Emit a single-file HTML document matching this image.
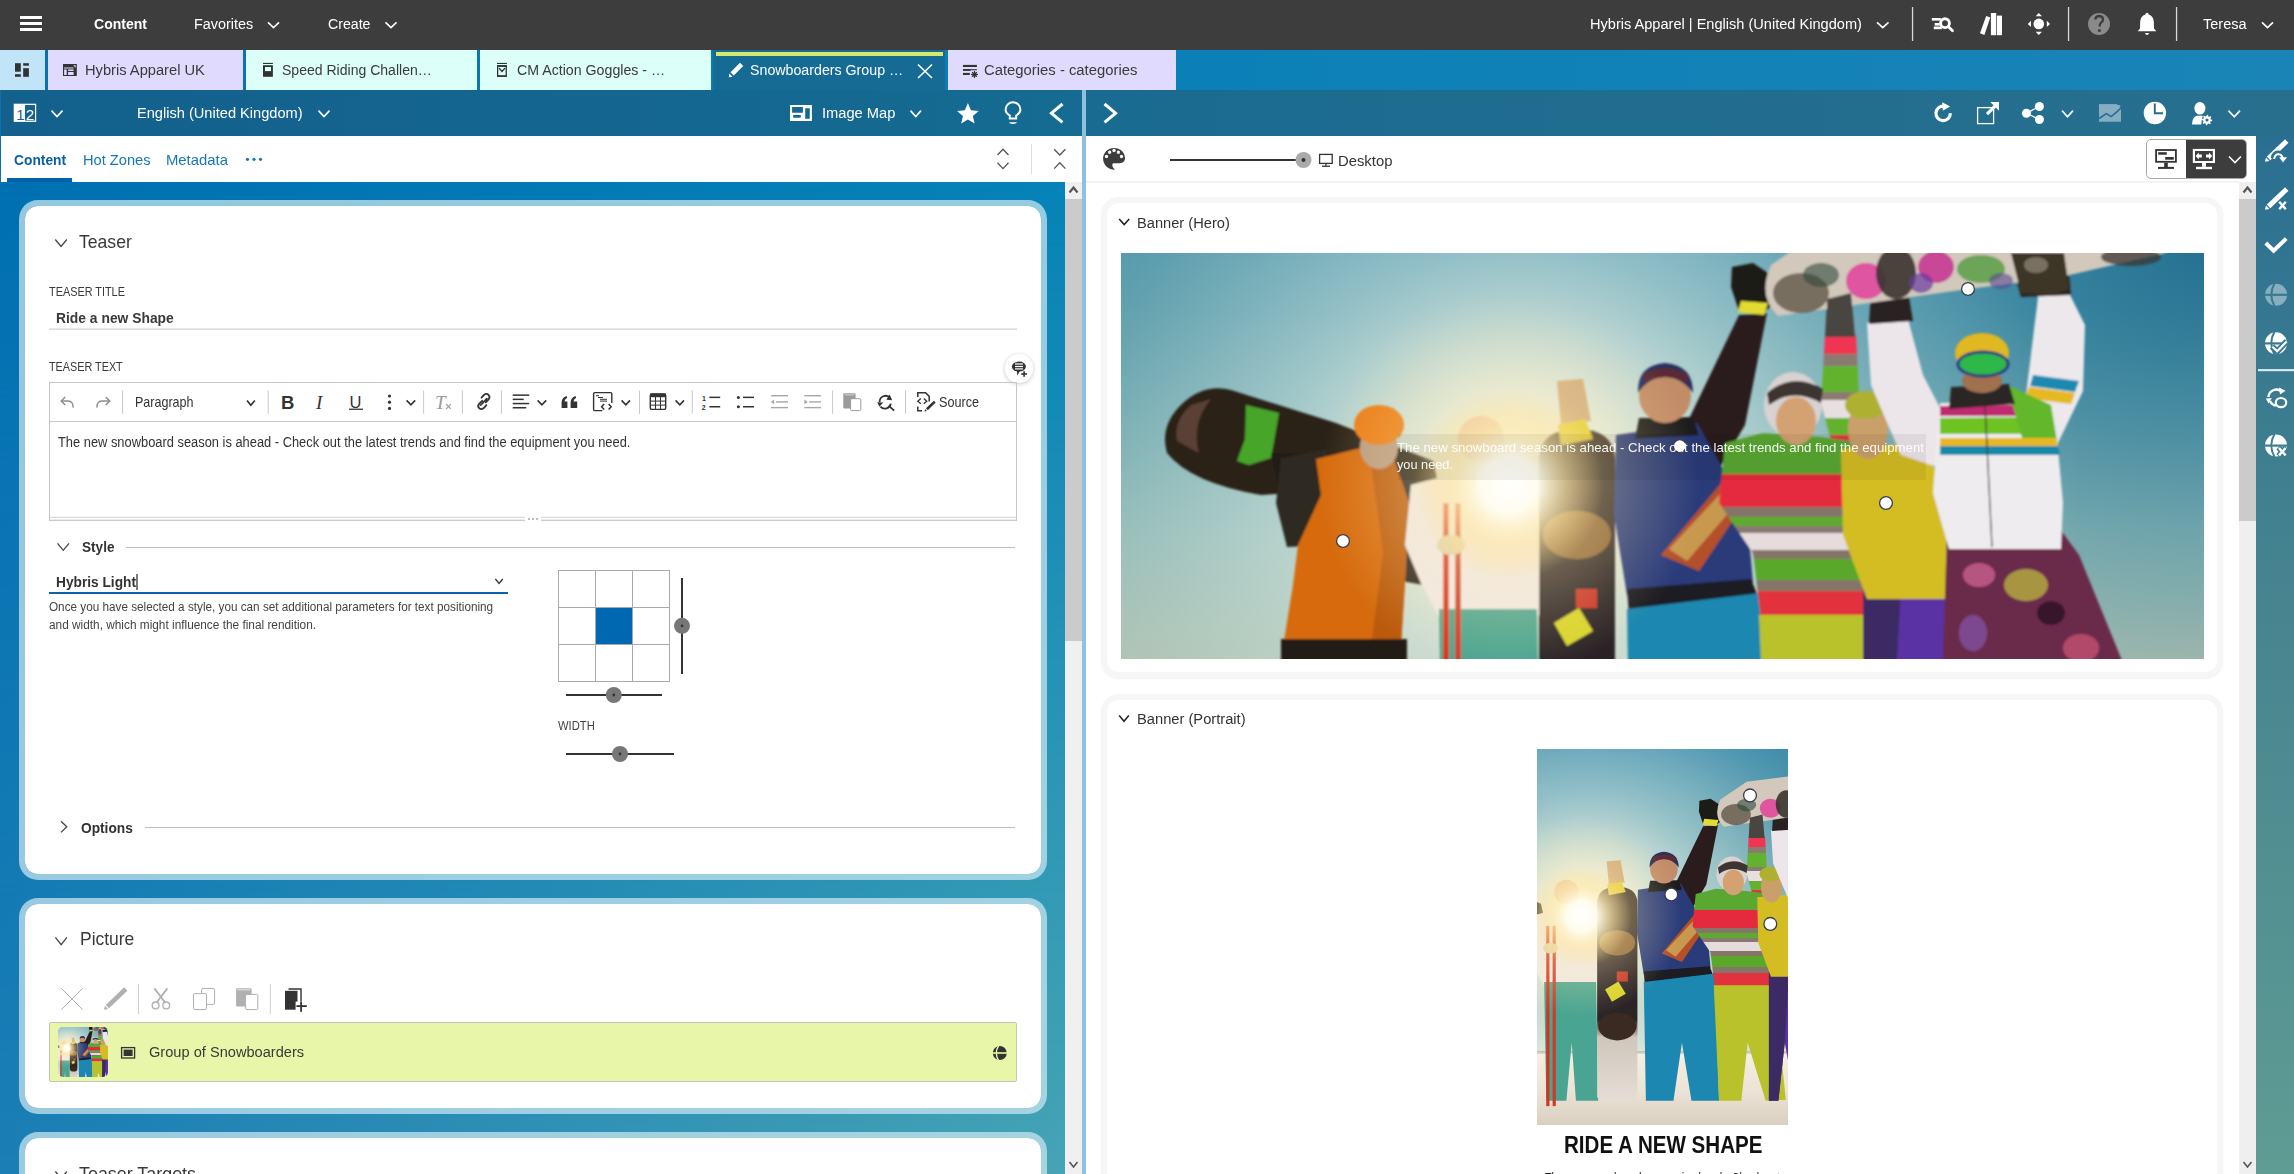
<!DOCTYPE html><html><head><meta charset="utf-8"><style>
*{box-sizing:border-box;margin:0;padding:0}
html,body{width:2294px;height:1174px;overflow:hidden;background:#fff;font-family:"Liberation Sans",sans-serif}
.a{position:absolute}
.tx{position:absolute;white-space:nowrap;line-height:1;transform-origin:0 0}
svg{position:absolute;overflow:visible}
</style></head><body>
<div class='a' style='left:0px;top:0px;width:2294px;height:50px;background:#3d3d3d'></div>
<div class='a' style='left:0px;top:50px;width:2294px;height:40px;background:linear-gradient(90deg,#0a6fae 0%,#0a80b8 50%,#1a84b6 100%)'></div>
<div class='a' style='left:0px;top:50px;width:45px;height:40px;background:#c2e4f9'></div>
<div class='a' style='left:48px;top:50px;width:195px;height:40px;background:#e0dbfe'></div>
<div class='a' style='left:246px;top:50px;width:231px;height:40px;background:#ddfff9'></div>
<div class='a' style='left:480px;top:50px;width:231px;height:40px;background:#ddfff9'></div>
<div class='a' style='left:713px;top:50px;width:232px;height:40px;background:#156b94'></div>
<div class='a' style='left:716px;top:52px;width:227px;height:4px;background:#d5ea6c'></div>
<div class='a' style='left:948px;top:50px;width:228px;height:40px;background:#e0dbfe'></div>
<div class='a' style='left:0px;top:90px;width:1082px;height:46px;background:linear-gradient(90deg,#13608d 0%,#156b92 100%)'></div>
<div class='a' style='left:0px;top:90px;width:1px;height:46px;background:#0a72b0'></div>
<div class='a' style='left:1086px;top:90px;width:1208px;height:46px;background:linear-gradient(90deg,#1a6b91 0%,#286f8e 100%)'></div>
<div class='a' style='left:1082px;top:90px;width:4px;height:1084px;background:#8ec2dc'></div>
<div class='a' style='left:0px;top:136px;width:1082px;height:46px;background:#fff'></div>
<div class='a' style='left:0px;top:136px;width:1px;height:46px;background:#0a72b0'></div>
<div class='a' style='left:7px;top:178px;width:65px;height:4px;background:#0461aa'></div>
<div class='a' style='left:0;top:182px;width:1065px;height:992px;background:linear-gradient(90deg,#0070b2,#0683b8)'></div>
<div class='a' style='left:0;top:182px;width:1065px;height:992px;background:linear-gradient(90deg,#1b7eb5,#46a4b4);-webkit-mask-image:linear-gradient(180deg,transparent,#000)'></div>
<div class='a' style='left:1065px;top:182px;width:17px;height:992px;background:#f0f0f0'></div>
<div class='a' style='left:1065px;top:199px;width:17px;height:442px;background:#cbcbcb'></div>
<div class='a' style='left:1086px;top:136px;width:1170px;height:1038px;background:#fff'></div>
<div class='a' style='left:1086px;top:181px;width:1153px;height:2px;background:linear-gradient(180deg,#ececec,#fafafa)'></div>
<div class='a' style='left:2239px;top:182px;width:17px;height:992px;background:#efefef'></div>
<div class='a' style='left:2239px;top:199px;width:17px;height:322px;background:#cbcbcb'></div>
<div class='a' style='left:2256px;top:136px;width:38px;height:1038px;background:linear-gradient(180deg,#2a6f92 0%,#41808f 35%,#5f9c94 100%)'></div>
<div class='a' style='left:2258px;top:369px;width:36px;height:2px;background:#cfe0e8'></div>
<div class='a' style='left:19px;top:200px;width:1028px;height:680px;border:6px solid rgba(200,230,240,0.74);border-radius:19px;background:#fff;background-clip:padding-box'></div>
<div class='a' style='left:19px;top:898px;width:1028px;height:216px;border:6px solid rgba(200,230,240,0.74);border-radius:19px;background:#fff;background-clip:padding-box'></div>
<div class='a' style='left:19px;top:1132px;width:1028px;height:168px;border:6px solid rgba(200,230,240,0.74);border-radius:19px;background:#fff;background-clip:padding-box'></div>
<div class='a' style='left:1101px;top:197px;width:1122px;height:481px;border:6px solid #f6f6f6;border-radius:18px;background:#fff;box-shadow:0 1px 2px rgba(0,0,0,0.06)'></div>
<div class='a' style='left:1101px;top:694px;width:1122px;height:606px;border:6px solid #f6f6f6;border-radius:18px;background:#fff;box-shadow:0 1px 2px rgba(0,0,0,0.06)'></div>
<svg style='left:0;top:0;width:0;height:0' width='0' height='0'>
<defs>
<linearGradient id='sky' gradientUnits='userSpaceOnUse' x1='0' y1='-90' x2='0' y2='500'>
 <stop offset='0' stop-color='#2f84a8'/><stop offset='0.25' stop-color='#4c94a8'/><stop offset='0.62' stop-color='#94bab4'/><stop offset='0.84' stop-color='#adbfae'/><stop offset='1' stop-color='#eeece0'/>
</linearGradient>
<radialGradient id='sunglow' gradientUnits='userSpaceOnUse' cx='400' cy='230' r='560'>
 <stop offset='0' stop-color='#fffbe6' stop-opacity='1'/><stop offset='0.15' stop-color='#f4f2e2' stop-opacity='0.9'/><stop offset='0.42' stop-color='#d4e8e2' stop-opacity='0.55'/><stop offset='0.75' stop-color='#c0dcd8' stop-opacity='0.2'/><stop offset='1' stop-color='#c8e0dc' stop-opacity='0'/>
</radialGradient>
<radialGradient id='darkTR' gradientUnits='userSpaceOnUse' cx='1090' cy='-20' r='520'>
 <stop offset='0' stop-color='#1f6a8c' stop-opacity='0.85'/><stop offset='0.6' stop-color='#2f7f9e' stop-opacity='0.35'/><stop offset='1' stop-color='#3a86a8' stop-opacity='0'/>
</radialGradient>
<radialGradient id='darkTL' gradientUnits='userSpaceOnUse' cx='-40' cy='-40' r='420'>
 <stop offset='0' stop-color='#4a92a0' stop-opacity='0.5'/><stop offset='1' stop-color='#5a9aa4' stop-opacity='0'/>
</radialGradient>
<radialGradient id='sun' gradientUnits='userSpaceOnUse' cx='388' cy='232' r='95'>
 <stop offset='0' stop-color='#ffffff' stop-opacity='1'/><stop offset='0.3' stop-color='#fffdf0' stop-opacity='0.95'/><stop offset='0.6' stop-color='#ffe9a8' stop-opacity='0.55'/><stop offset='1' stop-color='#ffd880' stop-opacity='0'/>
</radialGradient>
<radialGradient id='sunhalo' gradientUnits='userSpaceOnUse' cx='388' cy='232' r='190'>
 <stop offset='0' stop-color='#fff4c8' stop-opacity='0.6'/><stop offset='1' stop-color='#ffe8a0' stop-opacity='0'/>
</radialGradient>
<linearGradient id='stripes' gradientUnits='userSpaceOnUse' x1='0' y1='180' x2='0' y2='366'>
 <stop offset='0' stop-color='#5aa830'/><stop offset='0.22' stop-color='#5aa830'/><stop offset='0.22' stop-color='#e62a3e'/><stop offset='0.40' stop-color='#e62a3e'/><stop offset='0.40' stop-color='#857468'/><stop offset='0.45' stop-color='#857468'/>
 <stop offset='0.45' stop-color='#5eaa2e'/><stop offset='0.50' stop-color='#5eaa2e'/><stop offset='0.50' stop-color='#887a70'/><stop offset='0.54' stop-color='#887a70'/><stop offset='0.54' stop-color='#e6dcdc'/><stop offset='0.63' stop-color='#e6dcdc'/>
 <stop offset='0.63' stop-color='#857468'/><stop offset='0.68' stop-color='#857468'/><stop offset='0.68' stop-color='#5aa82c'/><stop offset='0.79' stop-color='#5aa82c'/><stop offset='0.79' stop-color='#857468'/><stop offset='0.85' stop-color='#857468'/><stop offset='0.85' stop-color='#e2303c'/><stop offset='1' stop-color='#e2303c'/>
</linearGradient>
<linearGradient id='armstripes' gradientUnits='userSpaceOnUse' x1='0' y1='82' x2='0' y2='200'>
 <stop offset='0' stop-color='#f03452'/><stop offset='0.16' stop-color='#f03452'/><stop offset='0.16' stop-color='#8a7a70'/><stop offset='0.26' stop-color='#8a7a70'/><stop offset='0.26' stop-color='#62b22e'/><stop offset='0.48' stop-color='#62b22e'/><stop offset='0.48' stop-color='#8a7a70'/><stop offset='0.55' stop-color='#8a7a70'/><stop offset='0.55' stop-color='#e8e0e0'/><stop offset='0.70' stop-color='#e8e0e0'/><stop offset='0.70' stop-color='#62b22e'/><stop offset='0.85' stop-color='#62b22e'/><stop offset='0.85' stop-color='#e83044'/><stop offset='1' stop-color='#e83044'/>
</linearGradient>
<linearGradient id='snow' gradientUnits='userSpaceOnUse' x1='0' y1='488' x2='0' y2='630'>
 <stop offset='0' stop-color='#f4f0e4'/><stop offset='0.5' stop-color='#ece4d6'/><stop offset='1' stop-color='#d8cec0'/>
</linearGradient>
<linearGradient id='boardmid' gradientUnits='userSpaceOnUse' x1='0' y1='180' x2='0' y2='580'>
 <stop offset='0' stop-color='#3a2c22'/><stop offset='0.45' stop-color='#2a2228'/><stop offset='0.62' stop-color='#2c2626'/><stop offset='0.70' stop-color='#cfc6bc'/><stop offset='1' stop-color='#e6ded6'/>
</linearGradient>
<filter id='soft' x='-5%' y='-5%' width='110%' height='110%'><feGaussianBlur stdDeviation='1.1'/></filter>
<filter id='soft2' x='-20%' y='-20%' width='140%' height='140%'><feGaussianBlur stdDeviation='6'/></filter>
<g id='scene'>
 <rect x='-100' y='-100' width='1300' height='760' fill='url(#sky)'/>
 <rect x='-100' y='-100' width='1300' height='760' fill='url(#darkTL)'/>
 <rect x='-100' y='-100' width='1300' height='760' fill='url(#darkTR)'/>
 <rect x='-100' y='-100' width='1300' height='760' fill='url(#sunglow)'/>
 <rect x='-100' y='488' width='1300' height='200' fill='url(#snow)'/>
 <rect x='-100' y='486' width='1300' height='5' fill='#8a8478' opacity='0.35'/>
 <g filter='url(#soft)'>
  <!-- left snowboard -->
  <path d='M46 200 Q38 172 62 150 Q84 130 110 137 L215 170 L312 208 L318 234 L288 242 L200 238 L140 242 Q70 230 46 200 Z' fill='#2b2019'/>
  <path d='M56 188 Q52 168 70 152 L90 146 Q70 170 78 200 Z' fill='#5a4034'/>
  <polygon points='125,152 158,160 150,205 128,212 116,208 124,186' fill='#47a52b'/>
  <polygon points='150,200 230,200 235,240 160,245' fill='#231a14'/>
  <!-- orange guy -->
  <polygon points='160,205 205,196 215,240 212,292 166,294 155,250' fill='#2d2a24'/>
  <polygon points='268,210 306,222 312,300 302,332 270,326' fill='#2a231e'/>
  <polygon points='195,206 240,195 272,204 288,250 284,330 280,392 162,394 172,332 177,292 200,242' fill='#d66a10'/>
  <polygon points='250,210 272,204 288,250 284,330 280,392 250,394 262,300' fill='#bb5a0c'/>
  <ellipse cx='258' cy='194' rx='19' ry='22' fill='#b99a80'/>
  <ellipse cx='258' cy='172' rx='25' ry='20' fill='#ea7d16'/>
  <rect x='160' y='386' width='126' height='24' fill='#221c18'/>
  <!-- white woman -->
  <ellipse cx='360' cy='186' rx='23' ry='23' fill='#e8c0a8'/>
  <polygon points='290,232 330,222 396,225 416,262 420,362 318,364 300,330 284,292' fill='#f0e8e8'/>
  <polygon points='318,356 416,356 420,580 378,580 370,470 360,580 322,580' fill='#4aa491'/>
  <rect x='322' y='250' width='6' height='340' fill='#d8331e'/>
  <rect x='334' y='250' width='6' height='340' fill='#d03a26'/>
  <ellipse cx='330' cy='292' rx='14' ry='10' fill='#e0d0a8'/>
  <!-- middle board -->
  <path d='M418 205 Q420 176 456 176 Q492 176 494 205 L494 574 Q456 590 418 574 Z' fill='url(#boardmid)'/>
  <ellipse cx='456' cy='440' rx='36' ry='26' fill='#3a2c20'/>
  <ellipse cx='456' cy='282' rx='34' ry='24' fill='#8a6030'/>
  <polygon points='433,370 458,355 472,378 446,393' fill='#d8d42a'/>
  <rect x='455' y='336' width='21' height='19' fill='#c83028'/>
  <polygon points='436,128 462,126 470,168 440,172' fill='#d0a878'/>
  <polygon points='437,172 464,166 472,186 440,192' fill='#e3cb28'/>
  <!-- blue guy -->
  <polygon points='565,172 618,62 646,60 624,172 598,216' fill='#2a1e1a'/>
  <polygon points='611,14 632,10 650,22 660,46 644,58 618,58 610,34' fill='#1e1a18'/>
  <polygon points='620,48 647,50 643,62 617,59' fill='#e2dc30'/>
  <polygon points='495,182 576,170 602,216 626,262 632,330 506,342 493,262' fill='#2b3b7a'/>
  <polygon points='518,165 572,164 578,182 514,186' fill='#1c1a1e'/>
  <ellipse cx='544' cy='143' rx='26' ry='27' fill='#c28c68'/>
  <path d='M517 140 Q516 112 544 110 Q572 112 572 140 Q560 124 544 124 Q528 124 517 140Z' fill='#26305e'/>
  <path d='M522 122 Q544 108 568 122 L566 130 Q544 118 524 130Z' fill='#5a2a34'/>
  <polygon points='506,336 630,326 638,346 508,362' fill='#1a1a22'/>
  <polygon points='506,356 640,340 648,580 596,580 578,470 562,580 510,580' fill='#1b87b0'/>
  <polygon points='540,302 622,204 648,214 578,318' fill='#b4502c'/>
  <polygon points='548,296 600,240 616,250 566,308' fill='#c89850'/>
  <!-- striped woman -->
  <polygon points='704,82 735,82 740,180 714,202 700,150' fill='url(#armstripes)'/>
  <polygon points='706,46 728,48 732,84 704,84' fill='#4a4440'/>
  <polygon points='604,190 642,180 700,184 742,190 752,250 750,366 640,366 632,300 598,250' fill='url(#stripes)'/>
  <polygon points='638,362 752,362 774,578 736,580 702,470 690,580 648,580' fill='#b9c22a'/>
  <ellipse cx='672' cy='152' rx='29' ry='33' fill='#d8d2d2'/>
  <ellipse cx='675' cy='168' rx='20' ry='24' fill='#d4a272'/>
  <path d='M646 140 Q672 118 702 136 L700 150 Q672 134 648 152Z' fill='#3e3630'/>
  <!-- yellow woman -->
  <polygon points='744,332 828,336 836,578 792,580 772,470 760,580 742,580' fill='#5a32a4'/>
  <polygon points='742,336 780,336 772,470 760,580 742,580' fill='#3a2c64'/>
  <polygon points='720,196 792,190 814,216 832,300 830,346 746,346 722,282' fill='#d4bd24'/>
  <ellipse cx='747' cy='176' rx='20' ry='30' fill='#c9a06a'/>
  <ellipse cx='745' cy='152' rx='21' ry='14' fill='#aeb032'/>
  <!-- right guy -->
  <polygon points='746,70 787,66 802,122 832,180 822,216 780,202 750,132' fill='#ece6ea'/>
  <polygon points='750,40 787,38 792,68 748,71' fill='#2a2420'/>
  <polygon points='918,36 946,36 964,72 962,138 936,192 904,150' fill='#ece8ec'/>
  <polygon points='912,122 958,128 954,139 909,133' fill='#1a8ab0'/>
  <polygon points='908,134 954,140 950,151 904,145' fill='#e6b820'/>
  <polygon points='888,0 946,0 950,42 900,44' fill='#2e2620'/>
  <polygon points='826,278 936,272 958,302 1002,410 1008,580 932,580 906,470 880,580 832,580 822,400' fill='#6a2a4a'/>
  <ellipse cx='905' cy='332' rx='22' ry='16' fill='#b8b040' opacity='0.8'/>
  <ellipse cx='858' cy='322' rx='16' ry='12' fill='#d86898' opacity='0.7'/>
  <ellipse cx='930' cy='360' rx='14' ry='12' fill='#2a1420' opacity='0.8'/>
  <ellipse cx='960' cy='395' rx='18' ry='14' fill='#e06080' opacity='0.6'/>
  <ellipse cx='852' cy='380' rx='14' ry='18' fill='#8860c0' opacity='0.6'/>
  <polygon points='819,150 886,148 936,186 942,250 940,296 828,296 812,240' fill='#efecef'/>
  <polygon points='819,153 900,152 908,163 819,163' fill='#c02a70'/>
  <polygon points='819,165 918,164 930,181 819,181' fill='#6ec224'/>
  <polygon points='886,132 930,152 936,188 902,188' fill='#62b82a'/>
  <polygon points='819,185 935,185 937,193 819,193' fill='#e6b820'/>
  <polygon points='819,193 937,193 939,202 819,202' fill='#1888a8'/>
  <line x1='864' y1='152' x2='871' y2='294' stroke='#333' stroke-width='1.2'/>
  <polygon points='830,134 888,131 894,151 828,156' fill='#2c2826'/>
  <ellipse cx='861' cy='128' rx='20' ry='12' fill='#a07050'/>
  <ellipse cx='861' cy='100' rx='27' ry='20' fill='#e0b820'/>
  <ellipse cx='862' cy='111' rx='25' ry='12' fill='#2fb84a' stroke='#2a3a80' stroke-width='3'/>
  <!-- top board -->
  <path d='M657 63 Q636 44 650 12 L700 -22 L1058 -68 Q1080 -40 1044 0 L940 24 L840 37 L727 53 Z' fill='#d2c8bc'/>
  <ellipse cx='680' cy='40' rx='28' ry='20' fill='#5a5040' opacity='0.75'/>
  <ellipse cx='700' cy='22' rx='18' ry='12' fill='#2e4a3a' opacity='0.6'/>
  <ellipse cx='745' cy='28' rx='20' ry='18' fill='#e0489c' opacity='0.9'/>
  <ellipse cx='775' cy='20' rx='20' ry='26' fill='#3a3430' opacity='0.9'/>
  <ellipse cx='815' cy='14' rx='18' ry='16' fill='#c83090' opacity='0.85'/>
  <ellipse cx='800' cy='30' rx='12' ry='10' fill='#6a3aa0' opacity='0.7'/>
  <ellipse cx='860' cy='16' rx='24' ry='14' fill='#4a9a38' opacity='0.75'/>
  <ellipse cx='880' cy='28' rx='12' ry='8' fill='#5a4a90' opacity='0.6'/>
  <ellipse cx='1010' cy='4' rx='30' ry='9' fill='#3a3630' opacity='0.75'/>
  <polygon points='890,0 943,0 948,36 930,42 900,40' fill='#3c3428'/>
  <ellipse cx='915' cy='12' rx='12' ry='8' fill='#8a8070' opacity='0.8'/>
  <polygon points='706,46 730,40 734,84 706,84' fill='#4a4440'/>
 </g>
 <rect x='-100' y='-100' width='1300' height='760' fill='url(#sunhalo)'/>
 <circle cx='388' cy='232' r='95' fill='url(#sun)'/>
</g>
</defs>
</svg>
<svg style='left:1121px;top:253px;overflow:hidden' width='1083' height='406' viewBox='0 0 1083 406'><use href='#scene'/><rect x='277' y='181' width='528' height='46' fill='#000' opacity='0.06'/></svg>
<svg style='left:1537px;top:749px;overflow:hidden' width='251' height='376' viewBox='0 0 251 376'><g transform='translate(-161.4,44.4) scale(0.53)'><use href='#scene'/></g></svg>
<div class='a' style='left:49px;top:1022px;width:968px;height:60px;background:#e7f6a9;border:1px solid #c3c7b4;border-radius:2px'></div>
<div class='a' style='left:58px;top:1027px;width:50px;height:50px;border-radius:5px;overflow:hidden'><svg style='left:0;top:0;overflow:hidden' width='50' height='50' viewBox='0 0 50 50'><g transform='translate(-30,-2) scale(0.1)'><use href='#scene'/></g></svg></div>
<div class='a' style='left:2146px;top:139px;width:101px;height:40px;border:1px solid #a8a8a8;border-radius:5px;background:linear-gradient(90deg,#fff 0,#fff 39px,#3d3d3d 39px)'></div>
<div class='a' style='left:1004.6px;top:354.1px;width:28.6px;height:28.6px;border-radius:50%;background:#fff;box-shadow:0 1px 4px rgba(0,0,0,0.22)'></div>
<svg style='left:0;top:0' width='2294' height='1174' viewBox='0 0 2294 1174'><rect x='20' y='16' width='22' height='3' fill='#fff'/><rect x='20' y='22' width='22' height='3' fill='#fff'/><rect x='20' y='28' width='22' height='3' fill='#fff'/><polyline points='268,22.3 273.5,27.6 279,22.3' fill='none' stroke='#fff' stroke-width='1.6'/><polyline points='385.5,22.3 391.0,27.6 396.5,22.3' fill='none' stroke='#fff' stroke-width='1.6'/><polyline points='1877,22.3 1882.75,27.6 1888.5,22.3' fill='none' stroke='#fff' stroke-width='1.6'/><polyline points='2262,22.3 2267.5,27.6 2273,22.3' fill='none' stroke='#fff' stroke-width='1.6'/><rect x='1911.9' y='7' width='1.3' height='34' fill='#d8d8d8'/><rect x='2067.9' y='7' width='1.3' height='34' fill='#d8d8d8'/><rect x='2175.9' y='7' width='1.3' height='34' fill='#d8d8d8'/><rect x='1931.8' y='18' width='9' height='2.6' fill='#fff'/><rect x='1934.7' y='23' width='5' height='2.6' fill='#fff'/><rect x='1933.8' y='26.5' width='8' height='2.7' fill='#fff'/><circle cx='1945' cy='23.2' r='4.4' fill='none' stroke='#fff' stroke-width='2.9'/><line x1='1948.5' y1='26.8' x2='1952.5' y2='30.8' stroke='#fff' stroke-width='2.8' stroke-linecap='round'/><polygon points='1980,33.3 1984.4,35 1990.3,17.4 1986.2,16' fill='#fff'/><rect x='1990.9' y='13' width='5.3' height='22.2' fill='#fff'/><rect x='1996.9' y='15.6' width='5.1' height='19.6' fill='#fff'/><circle cx='2038.8' cy='23.9' r='5.3' fill='#fff'/><polygon points='2038.8,13 2042,16.2 2035.6,16.2' fill='#fff'/><polygon points='2038.8,35 2042,31.8 2035.6,31.8' fill='#fff'/><polygon points='2027.8,23.9 2031,20.7 2031,27.1' fill='#fff'/><polygon points='2050,23.9 2046.8,20.7 2046.8,27.1' fill='#fff'/><circle cx='2099' cy='24' r='11' fill='#8a8a8a'/><path d='M2095.3 19.6 Q2095.6 16 2099.3 16 Q2103 16.2 2103 19.4 Q2103 21.4 2101 22.6 Q2099.6 23.6 2099.6 26.6' fill='none' stroke='#3d3d3d' stroke-width='2.3'/><circle cx='2099.4' cy='30.6' r='1.5' fill='#3d3d3d'/><path d='M2147 12.8 Q2148.5 12.8 2148.7 14.6 Q2153.3 16 2153.8 21.5 L2154 28.5 L2156.3 31.2 L2137.7 31.2 L2140 28.5 L2140.2 21.5 Q2140.7 16 2145.3 14.6 Q2145.5 12.8 2147 12.8 Z' fill='#fff'/><path d='M2145 33 L2149 33 Q2148.5 35 2147 35 Q2145.5 35 2145 33Z' fill='#fff'/><rect x='15' y='63.2' width='5.8' height='8.5' fill='#333'/><rect x='15' y='74.2' width='5.8' height='2.6' fill='#333'/><rect x='23.2' y='63.2' width='5.7' height='2.5' fill='#333'/><rect x='23.2' y='68.2' width='5.7' height='8.6' fill='#333'/><path fill-rule='evenodd' fill='#333' d='M63 64.1 H76.8 V76 H63 Z M64.1 67.6 V68.5 H73.6 V67.6 Z M64.1 69.4 V75 H66.7 V69.4 Z M68.1 69.4 V70.9 H73.6 V69.4 Z M68.1 72.1 V75 H73.6 V72.1 Z M73.2 65.2 L75.7 65.2 L75.7 67.7 Z'/><rect x='263' y='62.9' width='9.9' height='1.1' fill='#333'/><rect x='263' y='65.2' width='9.9' height='11.6' fill='#333'/><rect x='265' y='67' width='6' height='4.1' fill='#ddfff9'/><rect x='497' y='62.9' width='9.9' height='1.1' fill='#333'/><rect x='497.65' y='65.85' width='8.6' height='10.3' fill='none' stroke='#333' stroke-width='1.3'/><rect x='497' y='65.2' width='9.9' height='1.7' fill='#333'/><rect x='497' y='75.3' width='9.9' height='1.5' fill='#333'/><polyline points='499.4,68.5 502,71.5 504.6,68.5' fill='none' stroke='#333' stroke-width='1.2' stroke-linecap='round'/><g transform='translate(736,70) rotate(-45)'><rect x='-5.5' y='-2.3' width='13.5' height='4.6' fill='#fff'/><polygon points='-7.2,-2.3 -10.2,0 -7.2,2.3' fill='#fff'/></g><line x1='918' y1='64.5' x2='932' y2='78' stroke='#fff' stroke-width='1.6'/><line x1='932' y1='64.5' x2='918' y2='78' stroke='#fff' stroke-width='1.6'/><rect x='963' y='64.9' width='13.9' height='2.1' fill='#333'/><rect x='963' y='69' width='7.5' height='1.9' fill='#333'/><rect x='970' y='69.2' width='6.9' height='1.1' fill='#333'/><rect x='963' y='72.9' width='6.8' height='2.1' fill='#333'/><g transform='translate(974.5,74.5)' stroke='#333' stroke-width='1.1'><line x1='-3.5' y1='0' x2='3.5' y2='0'/><line x1='0' y1='-3.5' x2='0' y2='3.5'/><line x1='-2.4' y1='-2.4' x2='2.4' y2='2.4'/><line x1='-2.4' y1='2.4' x2='2.4' y2='-2.4'/><circle r='1.6' fill='#333'/></g><rect x='13.7' y='103.7' width='22.5' height='18.2' fill='#fff'/><rect x='25' y='105' width='10' height='15.6' fill='#14628e'/><polyline points='51.5,110.6 57.0,116.6 62.5,110.6' fill='none' stroke='#fff' stroke-width='1.6'/><polyline points='318.5,110.6 324.0,116.6 329.5,110.6' fill='none' stroke='#fff' stroke-width='1.6'/><path fill-rule='evenodd' fill='#fff' d='M790 104.9 H811.9 V121 H790 Z M792.1 107.1 V112.8 H802.9 V107.1 Z M793.2 115.1 V117.8 H800.8 V115.1 Z M805.2 108.2 V118.7 H809.8 V108.2 Z'/><polyline points='910.5,110.6 915.75,116.6 921,110.6' fill='none' stroke='#fff' stroke-width='1.6'/><polygon points='967.90,103.00 970.96,110.19 978.74,110.88 972.85,116.01 974.60,123.62 967.90,119.60 961.20,123.62 962.95,116.01 957.06,110.88 964.84,110.19' fill='#fff'/><path d='M1009.8 118.6 V115.6 Q1005.6 113 1005.6 109.6 A7.4 7.4 0 0 1 1020.4 109.6 Q1020.4 113 1016.2 115.6 V118.6 Z' fill='none' stroke='#fff' stroke-width='2'/><path d='M1009.2 122.3 H1016.8 Q1016.5 124 1013 124 Q1009.5 124 1009.2 122.3Z' fill='#fff'/><polyline points='1062.5,104 1051.4,113.2 1062.5,122.4' fill='none' stroke='#fff' stroke-width='3'/><polyline points='1104.5,104 1115.6,113.2 1104.5,122.4' fill='none' stroke='#fff' stroke-width='3'/><path d='M1950.3 113.2 A7.2 7.2 0 1 1 1944.5 106.3' fill='none' stroke='#fff' stroke-width='3.2'/><polygon points='1942.2,102.2 1950.2,106.4 1942.8,110.8' fill='#fff'/><rect x='1977.6' y='107.6' width='16' height='16' fill='none' stroke='#fff' stroke-width='1.3'/><line x1='1987' y1='114.2' x2='1996' y2='105.2' stroke='#fff' stroke-width='3.2'/><polygon points='1990.3,102 1999,102 1999,110.7' fill='#fff'/><line x1='2026.4' y1='113.2' x2='2039.4' y2='106.5' stroke='#fff' stroke-width='1.3'/><line x1='2026.4' y1='113.2' x2='2039.4' y2='119.5' stroke='#fff' stroke-width='1.3'/><circle cx='2039.4' cy='106.5' r='4.5' fill='#fff'/><circle cx='2026.4' cy='113.2' r='4.5' fill='#fff'/><circle cx='2039.4' cy='119.5' r='4.5' fill='#fff'/><polyline points='2062,110.6 2067.5,116.8 2073,110.6' fill='none' stroke='#fff' stroke-width='1.6'/><rect x='2099' y='104.1' width='22' height='17.6' fill='#86aec2'/><polyline points='2099,118.5 2106.3,113.6 2111.2,116.6 2116.8,111.8 2121,108' fill='none' stroke='#266c8f' stroke-width='1.6'/><polygon points='2116.8,104.1 2121,104.1 2121,108.3' fill='#266c8f'/><polygon points='2117.5,105 2120.2,105 2120.2,107.6' fill='#86aec2'/><circle cx='2154.9' cy='113' r='11.2' fill='#fff'/><polyline points='2154.8,103.6 2154.8,113.2 2163,113.2' fill='none' stroke='#246c8e' stroke-width='1.9'/><ellipse cx='2199.9' cy='108.2' rx='5.5' ry='6.3' fill='#fff'/><path d='M2192 124.5 Q2192.3 117 2196.8 115.8 L2203 115.8 Q2201.8 117.4 2201.3 124.5 Z' fill='#fff'/><polygon points='2212.20,120.00 2212.10,121.01 2210.51,121.45 2210.16,122.11 2210.68,123.68 2209.89,124.32 2208.45,123.51 2207.74,123.73 2207.00,125.20 2205.99,125.10 2205.55,123.51 2204.89,123.16 2203.32,123.68 2202.68,122.89 2203.49,121.45 2203.27,120.74 2201.80,120.00 2201.90,118.99 2203.49,118.55 2203.84,117.89 2203.32,116.32 2204.11,115.68 2205.55,116.49 2206.26,116.27 2207.00,114.80 2208.01,114.90 2208.45,116.49 2209.11,116.84 2210.68,116.32 2211.32,117.11 2210.51,118.55 2210.73,119.26' fill='#fff'/><circle cx='2207' cy='120' r='1.5' fill='#276d8f'/><polyline points='2228.5,110.6 2234.25,116.8 2240,110.6' fill='none' stroke='#fff' stroke-width='1.6'/><text x='16.2' y='120' font-family='Liberation Sans' font-size='15' fill='#14628e'>1</text><text x='25.8' y='120' font-family='Liberation Sans' font-size='15' fill='#fff'>2</text><circle cx='247.5' cy='159.3' r='1.6' fill='#1776b8'/><circle cx='254' cy='159.3' r='1.6' fill='#1776b8'/><circle cx='260.5' cy='159.3' r='1.6' fill='#1776b8'/><polyline points='997.5,155 1003.0,149.2 1008.5,155' fill='none' stroke='#555' stroke-width='1.3'/><polyline points='997.5,162.8 1003.0,168.6 1008.5,162.8' fill='none' stroke='#555' stroke-width='1.3'/><rect x='1031' y='144' width='1' height='30' fill='#ddd'/><polyline points='1054.2,149.2 1059.8000000000002,155 1065.4,149.2' fill='none' stroke='#555' stroke-width='1.3'/><polyline points='1054.2,168.6 1059.8000000000002,162.8 1065.4,168.6' fill='none' stroke='#555' stroke-width='1.3'/><polyline points='1069.5,192.5 1073.5,187.5 1077.5,192.5' fill='none' stroke='#555' stroke-width='2.2'/><polyline points='2243.5,192.5 2247.5,187.5 2251.5,192.5' fill='none' stroke='#555' stroke-width='2.2'/><polyline points='1069.5,1162 1073.5,1167 1077.5,1162' fill='none' stroke='#555' stroke-width='1.6'/><polyline points='2243.5,1162 2247.5,1167 2251.5,1162' fill='none' stroke='#555' stroke-width='1.6'/><path fill-rule='evenodd' fill='#3d3d3d' d='M1114 147.9 C1120.5 147.9 1125 152.6 1125 158 C1125 161.4 1122.6 163.2 1119.8 163.2 L1113.6 163.2 C1111.6 163.6 1111.8 166.3 1115 169.8 C1108.6 169.8 1103.1 165.4 1103.1 158.6 C1103.1 152.6 1108 147.9 1114 147.9 Z M1106.5 156.5 m-1.7 0 a1.7 1.7 0 1 0 3.4 0 a1.7 1.7 0 1 0 -3.4 0 Z M1109.7 152.3 m-1.7 0 a1.7 1.7 0 1 0 3.4 0 a1.7 1.7 0 1 0 -3.4 0 Z M1114 150.5 m-1.7 0 a1.7 1.7 0 1 0 3.4 0 a1.7 1.7 0 1 0 -3.4 0 Z M1118.4 152.3 m-1.7 0 a1.7 1.7 0 1 0 3.4 0 a1.7 1.7 0 1 0 -3.4 0 Z M1121.5 156.5 m-1.7 0 a1.7 1.7 0 1 0 3.4 0 a1.7 1.7 0 1 0 -3.4 0 Z'/><rect x='1170' y='159' width='134' height='2' fill='#333'/><circle cx='1303.5' cy='160' r='8' fill='#aaa'/><circle cx='1303.5' cy='160' r='2' fill='#333'/><rect x='1319.6' y='154.4' width='12.6' height='9' fill='none' stroke='#333' stroke-width='1.3'/><rect x='1325.3' y='163.4' width='1.3' height='2.4' fill='#333'/><rect x='1322' y='165.6' width='8' height='1.3' fill='#333'/><rect x='2156.1' y='150' width='19.8' height='11.8' fill='none' stroke='#333' stroke-width='1.8'/><rect x='2158.2' y='152.2' width='8.6' height='2.5' fill='#333'/><rect x='2165.2' y='157' width='8.6' height='2.7' fill='#333'/><rect x='2164.2' y='162.7' width='3.6' height='4.4' fill='#333'/><rect x='2158' y='166.9' width='16' height='2' fill='#333'/><rect x='2192.8' y='148.9' width='22.2' height='14.1' fill='#fff'/><rect x='2195' y='151' width='17.8' height='10' fill='#3d3d3d'/><polygon points='2195.6,156 2198.8,152.4 2198.8,154.6 2201.8,154.6 2201.8,157.4 2198.8,157.4 2198.8,159.6' fill='#fff'/><polygon points='2212.2,156 2209,152.4 2209,154.6 2206,154.6 2206,157.4 2209,157.4 2209,159.6' fill='#fff'/><rect x='2202' y='163' width='4' height='3.8' fill='#fff'/><rect x='2196' y='166.8' width='16' height='2.4' fill='#fff'/><polyline points='2229,156.5 2234.95,162.6 2240.9,156.5' fill='none' stroke='#fff' stroke-width='1.5'/><g transform='translate(2265,161.8) rotate(-43.66)'><polygon points='0,0 3.75,-2.50 3.75,2.50' fill='#fff'/><rect x='4.95' y='-2.50' width='25.18' height='5' fill='#fff'/></g><path d='M2272.8 158.5 Q2273.8 152.5 2278.6 152.8 Q2283 153.2 2283.4 158' fill='none' stroke='#2e7192' stroke-width='4.4'/><path d='M2274.2 159 Q2274.8 154 2278.6 154.2 Q2282.2 154.5 2282.6 158.6' fill='none' stroke='#fff' stroke-width='2'/><polygon points='2279.2,157.2 2287,157.2 2283,162.6' fill='#fff'/><g transform='translate(2265,209.8) rotate(-43.66)'><polygon points='0,0 3.75,-2.50 3.75,2.50' fill='#fff'/><rect x='4.95' y='-2.50' width='25.18' height='5' fill='#fff'/></g><line x1='2279' y1='201.5' x2='2286' y2='209.5' stroke='#2e7192' stroke-width='5'/><line x1='2286' y1='201.5' x2='2279' y2='209.5' stroke='#2e7192' stroke-width='5'/><line x1='2279.2' y1='201.8' x2='2285.8' y2='209.2' stroke='#fff' stroke-width='2.4'/><line x1='2285.8' y1='201.8' x2='2279.2' y2='209.2' stroke='#fff' stroke-width='2.4'/><polyline points='2265.8,243 2273.6,250.6 2286.2,238.6' fill='none' stroke='#fff' stroke-width='4'/><circle cx='2276.1' cy='294.7' r='11' fill='#87afbf'/><rect x='2264.1' y='293.7' width='24' height='2.2' fill='#3a7a92'/><path d='M2274.6 283.2 Q2268.1 294.7 2274.6 306.2' fill='none' stroke='#3a7a92' stroke-width='2'/><circle cx='2276' cy='343.3' r='11' fill='#fff'/><rect x='2264' y='342.3' width='24' height='2.2' fill='#3a7b92'/><path d='M2274.5 331.8 Q2268 343.3 2274.5 354.8' fill='none' stroke='#3a7b92' stroke-width='2'/><polyline points='2272,346.5 2277.2,351.5 2287,341' fill='none' stroke='#3a7b92' stroke-width='6'/><polyline points='2272.4,346.8 2277.2,351.3 2286.6,341.4' fill='none' stroke='#fff' stroke-width='2.2'/><rect x='2258' y='369.6' width='36' height='1.6' fill='#d8e8ee'/><path d='M2281.5 391.5 A8 8 0 0 0 2268.4 397' fill='none' stroke='#fff' stroke-width='2.4'/><polygon points='2279,387.5 2285.5,390.8 2280,394.6' fill='#fff'/><path d='M2270 401 A8 8 0 0 0 2276 405.6' fill='none' stroke='#fff' stroke-width='2.4'/><polygon points='2265.8,398.5 2271.8,398 2268.6,403.5' fill='#fff'/><ellipse cx='2281' cy='402.6' rx='5.2' ry='4.6' fill='none' stroke='#fff' stroke-width='2.2'/><circle cx='2276' cy='445.5' r='11' fill='#fff'/><rect x='2264' y='444.5' width='24' height='2.2' fill='#3f7f92'/><path d='M2274.5 434.0 Q2268 445.5 2274.5 457.0' fill='none' stroke='#3f7f92' stroke-width='2'/><line x1='2278.4' y1='447.4' x2='2286.2' y2='456' stroke='#3f7f92' stroke-width='5.6'/><line x1='2286.2' y1='447.4' x2='2278.4' y2='456' stroke='#3f7f92' stroke-width='5.6'/><line x1='2279' y1='448' x2='2285.6' y2='455.4' stroke='#fff' stroke-width='2.4'/><line x1='2285.6' y1='448' x2='2279' y2='455.4' stroke='#fff' stroke-width='2.4'/><polyline points='55.3,239.5 61.05,246.5 66.8,239.5' fill='none' stroke='#444' stroke-width='1.3'/><rect x='49' y='328.6' width='968' height='1' fill='#c6c6c6'/><rect x='49.5' y='382.5' width='967' height='138' fill='none' stroke='#c6c6c6' stroke-width='1'/><rect x='50' y='421' width='966' height='1' fill='#c6c6c6'/><rect x='50' y='516.8' width='966' height='1' fill='#cfcfcf'/><rect x='50' y='519.6' width='966' height='1' fill='#cfcfcf'/><rect x='525' y='515' width='16' height='6' fill='#fff'/><rect x='528' y='518' width='2' height='2' fill='#bbb'/><rect x='532' y='518' width='2' height='2' fill='#bbb'/><rect x='536' y='518' width='2' height='2' fill='#bbb'/><rect x='122.1' y='390.5' width='1' height='23.3' fill='#c9c9c9'/><rect x='267.7' y='390.5' width='1' height='23.3' fill='#c9c9c9'/><rect x='423.1' y='390.5' width='1' height='23.3' fill='#c9c9c9'/><rect x='461.9' y='390.5' width='1' height='23.3' fill='#c9c9c9'/><rect x='500.9' y='390.5' width='1' height='23.3' fill='#c9c9c9'/><rect x='639.0' y='390.5' width='1' height='23.3' fill='#c9c9c9'/><rect x='691.8' y='390.5' width='1' height='23.3' fill='#c9c9c9'/><rect x='832.1' y='390.5' width='1' height='23.3' fill='#c9c9c9'/><rect x='905.0' y='390.5' width='1' height='23.3' fill='#c9c9c9'/><path d='M73 407.6 Q73.6 401.3 68 401 L61.5 401' fill='none' stroke='#8c8c8c' stroke-width='1.4'/><polyline points='65.2,397 61.2,401 65.2,405' fill='none' stroke='#8c8c8c' stroke-width='1.4'/><path d='M97 407.6 Q96.4 401.3 102 401 L109.5 401' fill='none' stroke='#8c8c8c' stroke-width='1.4'/><polyline points='105.8,397 109.8,401 105.8,405' fill='none' stroke='#8c8c8c' stroke-width='1.4'/><polyline points='247,400.5 250.9,405.2 254.8,400.5' fill='none' stroke='#333' stroke-width='1.7'/><text x='281' y='409.2' font-family='Liberation Sans' font-weight='700' font-size='18.5' fill='#333'>B</text><text x='316' y='409.4' font-family='Liberation Serif' font-style='italic' font-size='19' fill='#333'>I</text><text x='349.4' y='407.5' font-family='Liberation Sans' font-size='16.5' fill='#333'>U</text><rect x='349' y='408.6' width='14' height='1.3' fill='#333'/><circle cx='389.5' cy='396' r='1.6' fill='#333'/><circle cx='389.5' cy='402.2' r='1.6' fill='#333'/><circle cx='389.5' cy='408.4' r='1.6' fill='#333'/><polyline points='406.6,400.4 410.9,404.8 415.2,400.4' fill='none' stroke='#333' stroke-width='1.6'/><text x='435' y='409' font-family='Liberation Serif' font-style='italic' font-size='19' fill='#999'>T</text><line x1='446.2' y1='404.2' x2='450.8' y2='408.8' stroke='#999' stroke-width='1.2'/><line x1='450.8' y1='404.2' x2='446.2' y2='408.8' stroke='#999' stroke-width='1.2'/><path d='M481.5 397.6 L484 395 Q486.4 392.8 488.6 395 Q490.6 397.2 488.4 399.6 L485.8 402.3 M482.2 400.8 L479.3 403.6 Q477 406 479.2 408.2 Q481.4 410.2 483.7 408 L486.4 405.2 M480.8 405 L486.8 398.6' fill='none' stroke='#333' stroke-width='1.8' stroke-linecap='round'/><rect x='512.7' y='394.4' width='16.5' height='1.5' fill='#333'/><rect x='512.7' y='398.6' width='11' height='1.5' fill='#333'/><rect x='512.7' y='402.8' width='16.5' height='1.5' fill='#333'/><rect x='512.7' y='407' width='13.5' height='1.5' fill='#333'/><polyline points='537.6,400.4 541.9000000000001,404.8 546.2,400.4' fill='none' stroke='#333' stroke-width='1.6'/><path d='M561.6 408 V402.6 Q561.6 397.6 566.6 396 L567.2 397.8 Q564.4 399.2 564.6 401.6 H567.4 V408 Z M570.6 408 V402.6 Q570.6 397.6 575.6 396 L576.2 397.8 Q573.4 399.2 573.6 401.6 H577.2 V408 Z' fill='#333'/><path d='M602.4 410.6 H594.6 Q593.6 410.6 593.6 409.6 V393.8 Q593.6 392.6 594.8 392.6 H610.6 Q611.8 392.6 611.8 393.8 V403' fill='none' stroke='#333' stroke-width='1.4'/><rect x='596' y='395.2' width='3' height='1' fill='#333'/><rect x='598' y='397' width='5' height='1' fill='#333'/><rect x='600' y='398.8' width='7' height='1' fill='#333'/><rect x='600' y='400.6' width='7' height='1' fill='#333'/><polyline points='604.2,404 601.6,406.8 604.2,409.6' fill='none' stroke='#333' stroke-width='1.5'/><polyline points='608.6,404 611.2,406.8 608.6,409.6' fill='none' stroke='#333' stroke-width='1.5'/><polyline points='621.6,400.4 625.8,404.8 630,400.4' fill='none' stroke='#333' stroke-width='1.6'/><rect x='650.3' y='394' width='15.4' height='15.4' rx='1.5' fill='none' stroke='#333' stroke-width='1.4'/><rect x='650' y='393.6' width='16' height='3.6' fill='#333'/><rect x='650' y='400.6' width='16' height='1' fill='#333'/><rect x='650' y='404.6' width='16' height='1' fill='#333'/><rect x='655' y='396' width='1' height='13' fill='#333'/><rect x='660' y='396' width='1' height='13' fill='#333'/><polyline points='675.6,400.4 679.8,404.8 684,400.4' fill='none' stroke='#333' stroke-width='1.6'/><text x='702' y='401' font-family='Liberation Sans' font-weight='700' font-size='7' fill='#333'>1</text><text x='701.8' y='410.2' font-family='Liberation Sans' font-weight='700' font-size='7' fill='#333'>2</text><rect x='709.4' y='396.6' width='10.8' height='1.5' fill='#333'/><rect x='709.4' y='406' width='10.8' height='1.5' fill='#333'/><circle cx='738.4' cy='397.4' r='1.5' fill='#333'/><circle cx='738.4' cy='406.8' r='1.5' fill='#333'/><rect x='743' y='396.6' width='11' height='1.5' fill='#333'/><rect x='743' y='406' width='11' height='1.5' fill='#333'/><rect x='771' y='395' width='17' height='1.4' fill='#a8a8a8'/><rect x='776' y='401.2' width='12' height='1.4' fill='#a8a8a8'/><rect x='771' y='406.9' width='17' height='1.4' fill='#a8a8a8'/><polygon points='770.8,401.9 774.2,399.6 774.2,404.2' fill='#a8a8a8'/><rect x='804.3' y='395' width='16.8' height='1.4' fill='#a8a8a8'/><rect x='809' y='401.2' width='12' height='1.4' fill='#a8a8a8'/><rect x='804.3' y='406.9' width='16.8' height='1.4' fill='#a8a8a8'/><polygon points='807.8,401.9 804.4,399.6 804.4,404.2' fill='#a8a8a8'/><rect x='843.3' y='393.2' width='12.3' height='15.2' rx='1.2' fill='#9a9a9a'/><rect x='844.6' y='394.4' width='9.6' height='0.9' fill='#ddd'/><rect x='850.6' y='398.7' width='10.2' height='11.9' rx='1.2' fill='#fff' stroke='#9a9a9a' stroke-width='1'/><path d='M879.6 402 A6 6 0 0 1 890.2 398' fill='none' stroke='#333' stroke-width='1.8'/><polygon points='889.6,394.6 892.2,400.2 886.4,399.8' fill='#333'/><path d='M890.8 403.6 A6 6 0 0 1 880.4 406.6' fill='none' stroke='#333' stroke-width='1.8'/><polygon points='877.2,402.2 883.2,402.6 879.4,406.8' fill='#333'/><line x1='888.6' y1='405.6' x2='894.2' y2='410.6' stroke='#333' stroke-width='1.9'/><path d='M917.8 397 V392.8 H925.6 L929.2 396.4 V401.4 M917.8 406.6 V410.8 H922' fill='none' stroke='#333' stroke-width='1.5'/><polyline points='920.8,398.6 917.8,401.2 920.8,403.8' fill='none' stroke='#333' stroke-width='1.3'/><polyline points='923.8,398.6 926.8,401.2 923.8,403.8' fill='none' stroke='#333' stroke-width='1.3'/><g transform='translate(924.6,411.4) rotate(-43.85)'><polygon points='0,0 1.95,-1.30 1.95,1.30' fill='#333'/><rect x='3.15' y='-1.30' width='10.99' height='2.6' fill='#333'/></g><ellipse cx='1018.9' cy='366.6' rx='7' ry='5' fill='#333'/><rect x='1015' y='363.4' width='8' height='1.2' fill='#fff'/><rect x='1015' y='365.9' width='8' height='1.2' fill='#fff'/><rect x='1015' y='368.3' width='8' height='1.2' fill='#fff'/><polygon points='1017,370.5 1020,370.8 1017.2,375.8' fill='#333'/><rect x='1021.2' y='373.2' width='5.8' height='1.6' fill='#333'/><rect x='1023.3' y='371.2' width='1.6' height='5.6' fill='#333'/><polyline points='57.5,543.3 63.25,550.3 69,543.3' fill='none' stroke='#444' stroke-width='1.3'/><rect x='126' y='547' width='889' height='1' fill='#bdbdbd'/><rect x='136.4' y='574' width='1.2' height='16' fill='#222'/><polyline points='495.4,579 499.1,583.4 502.8,579' fill='none' stroke='#333' stroke-width='1.3'/><rect x='49' y='592' width='459' height='2' fill='#0a62ab'/><rect x='558.5' y='570.5' width='111' height='111' fill='#fff' stroke='#a9a9a9' stroke-width='1'/><rect x='595.5' y='570.5' width='37' height='111' fill='none' stroke='#a9a9a9' stroke-width='1'/><rect x='558.5' y='607.5' width='111' height='37' fill='none' stroke='#a9a9a9' stroke-width='1'/><rect x='596' y='608' width='36' height='36' fill='#0068b1'/><rect x='681' y='578' width='2' height='96' fill='#333'/><circle cx='682' cy='625.8' r='8' fill='#777'/><circle cx='682' cy='625.8' r='1.4' fill='#333'/><rect x='566' y='694' width='96' height='2' fill='#333'/><circle cx='613.8' cy='695' r='8' fill='#777'/><circle cx='613.8' cy='695' r='1.4' fill='#333'/><rect x='566' y='753' width='108' height='2' fill='#333'/><circle cx='620' cy='754' r='8' fill='#777'/><circle cx='620' cy='754' r='1.4' fill='#333'/><polyline points='61,821.2 66.8,826.8 61,832.4' fill='none' stroke='#444' stroke-width='1.3'/><rect x='145' y='827' width='870' height='1' fill='#bdbdbd'/><polyline points='55.4,937.4 61.150000000000006,944.6 66.9,937.4' fill='none' stroke='#444' stroke-width='1.3'/><line x1='61.4' y1='988.4' x2='82.6' y2='1009.6' stroke='#b0b0b0' stroke-width='1'/><line x1='82.6' y1='988.4' x2='61.4' y2='1009.6' stroke='#b0b0b0' stroke-width='1'/><g transform='translate(104,1009.8) rotate(-43.66)'><polygon points='0,0 3.45,-2.30 3.45,2.30' fill='#b0b0b0'/><rect x='4.65' y='-2.30' width='25.48' height='4.6' fill='#b0b0b0'/></g><rect x='138.0' y='984' width='1' height='30' fill='#cfcfcf'/><rect x='269.8' y='984' width='1' height='30' fill='#cfcfcf'/><circle cx='155.6' cy='1005.4' r='3.4' fill='none' stroke='#b0b0b0' stroke-width='1.3'/><circle cx='166.2' cy='1005.4' r='3.4' fill='none' stroke='#b0b0b0' stroke-width='1.3'/><line x1='156.8' y1='1002.2' x2='167.4' y2='988.4' stroke='#b0b0b0' stroke-width='1.8'/><line x1='165' y1='1002.2' x2='154.4' y2='988.4' stroke='#b0b0b0' stroke-width='1.8'/><rect x='201.6' y='988.4' width='13' height='16' rx='1.4' fill='#fff' stroke='#b0b0b0' stroke-width='1'/><rect x='193.5' y='993.6' width='13' height='16' rx='1.4' fill='#fff' stroke='#b0b0b0' stroke-width='1'/><rect x='236.1' y='988.2' width='15.5' height='18.4' rx='1.4' fill='#b0b0b0'/><rect x='237.4' y='989.4' width='12.6' height='0.9' fill='#eee'/><rect x='245.6' y='994.4' width='12.2' height='15.2' rx='1.4' fill='#fff' stroke='#b0b0b0' stroke-width='1'/><polyline points='288.5,989 301,989 301,1001' fill='none' stroke='#333' stroke-width='1.4'/><rect x='285' y='990.8' width='12.5' height='18.9' fill='#333'/><rect x='295.6' y='1001.6' width='8.4' height='8.4' fill='#fff'/><rect x='296.4' y='1005.2' width='10.4' height='1.8' fill='#333'/><rect x='300.2' y='1001.4' width='1.8' height='10.4' fill='#333'/><circle cx='1968' cy='289' r='6.4' fill='#fff' stroke='#3a3a4a' stroke-width='1.3'/><circle cx='1679.8' cy='446' r='6.4' fill='#fff' stroke='#3a3a4a' stroke-width='1.3'/><circle cx='1886' cy='503' r='6.4' fill='#fff' stroke='#3a3a4a' stroke-width='1.3'/><circle cx='1343' cy='541' r='6.4' fill='#fff' stroke='#3a3a4a' stroke-width='1.3'/><circle cx='1750' cy='795.4' r='6.4' fill='#fff' stroke='#3a3a4a' stroke-width='1.3'/><circle cx='1671.3' cy='894.5' r='6.4' fill='#fff' stroke='#3a3a4a' stroke-width='1.3'/><circle cx='1770.3' cy='923.9' r='6.4' fill='#fff' stroke='#3a3a4a' stroke-width='1.3'/><rect x='121.6' y='1047.6' width='13' height='10.4' fill='none' stroke='#333' stroke-width='1.3'/><rect x='123.6' y='1049.6' width='9' height='6.4' fill='#333'/><circle cx='999.8' cy='1053' r='7' fill='#333'/><rect x='992' y='1052.2' width='16' height='1.6' fill='#e7f6a9'/><path d='M998.6 1045.6 Q994 1053 998.6 1060.4' fill='none' stroke='#e7f6a9' stroke-width='1.4'/><polyline points='55.4,1171.5 61.150000000000006,1178.5 66.9,1171.5' fill='none' stroke='#444' stroke-width='1.3'/><polyline points='1119.2,219 1124.2,224.6 1129.2,219' fill='none' stroke='#222' stroke-width='1.6'/><polyline points='1119.2,715.6 1124.0,721.2 1128.8,715.6' fill='none' stroke='#222' stroke-width='1.6'/></svg>
<div id='t0' class='tx' style='left:94px;top:15.83px;font-size:15.5px;font-weight:700;color:#ffffff;transform:scaleX(0.9053);'>Content</div>
<div id='t1' class='tx' style='left:193.5px;top:15.83px;font-size:15.5px;font-weight:400;color:#ffffff;transform:scaleX(0.9286);'>Favorites</div>
<div id='t2' class='tx' style='left:328.3px;top:15.83px;font-size:15.5px;font-weight:400;color:#ffffff;transform:scaleX(0.9134);'>Create</div>
<div id='t3' class='tx' style='left:1590.4px;top:15.63px;font-size:15.5px;font-weight:400;color:#ffffff;transform:scaleX(0.9402);'>Hybris Apparel | English (United Kingdom)</div>
<div id='t4' class='tx' style='left:2203.3px;top:16.02px;font-size:15.5px;font-weight:400;color:#ffffff;transform:scaleX(0.9349);'>Teresa</div>
<div id='t5' class='tx' style='left:84.5px;top:62.03px;font-size:15.5px;font-weight:400;color:#3a3a3a;transform:scaleX(0.9468);'>Hybris Apparel UK</div>
<div id='t6' class='tx' style='left:282.2px;top:62.03px;font-size:15.5px;font-weight:400;color:#3a3a3a;transform:scaleX(0.9055);'>Speed Riding Challen…</div>
<div id='t7' class='tx' style='left:516.6px;top:62.03px;font-size:15.5px;font-weight:400;color:#3a3a3a;transform:scaleX(0.9151);'>CM Action Goggles - …</div>
<div id='t8' class='tx' style='left:750.4px;top:62.03px;font-size:15.5px;font-weight:400;color:#ffffff;transform:scaleX(0.9166);'>Snowboarders Group …</div>
<div id='t9' class='tx' style='left:984.4px;top:61.83px;font-size:15.5px;font-weight:400;color:#3a3a3a;transform:scaleX(0.9573);'>Categories - categories</div>
<div id='t10' class='tx' style='left:137.3px;top:104.62px;font-size:15.5px;font-weight:400;color:#ffffff;transform:scaleX(0.9422);'>English (United Kingdom)</div>
<div id='t11' class='tx' style='left:821.6px;top:104.62px;font-size:15.5px;font-weight:400;color:#ffffff;transform:scaleX(0.9465);'>Image Map</div>
<div id='t12' class='tx' style='left:13.8px;top:152.58px;font-size:14.5px;font-weight:700;color:#0a5f9f;transform:scaleX(0.9513);'>Content</div>
<div id='t13' class='tx' style='left:82.6px;top:152.58px;font-size:14.5px;font-weight:400;color:#1776b8;transform:scaleX(1.0089);'>Hot Zones</div>
<div id='t14' class='tx' style='left:166.3px;top:152.58px;font-size:14.5px;font-weight:400;color:#1776b8;transform:scaleX(1.0237);'>Metadata</div>
<div id='t15' class='tx' style='left:79.2px;top:232.58px;font-size:18.5px;font-weight:400;color:#3a3a3a;transform:scaleX(0.9508);'>Teaser</div>
<div id='t16' class='tx' style='left:49.3px;top:284.55px;font-size:13px;font-weight:400;color:#3a3a3a;transform:scaleX(0.8359);'>TEASER TITLE</div>
<div id='t17' class='tx' style='left:55.5px;top:310.02px;font-size:15.5px;font-weight:700;color:#3a3a3a;transform:scaleX(0.8938);'>Ride a new Shape</div>
<div id='t18' class='tx' style='left:49.3px;top:360.25px;font-size:13px;font-weight:400;color:#3a3a3a;transform:scaleX(0.8316);'>TEASER TEXT</div>
<div id='t19' class='tx' style='left:135px;top:395.28px;font-size:14.5px;font-weight:400;color:#333;transform:scaleX(0.8639);'>Paragraph</div>
<div id='t20' class='tx' style='left:938.5px;top:395.18px;font-size:14.5px;font-weight:400;color:#333;transform:scaleX(0.8705);'>Source</div>
<div id='t21' class='tx' style='left:58.3px;top:434.50px;font-size:14px;font-weight:400;color:#333;transform:scaleX(0.9193);'>The new snowboard season is ahead - Check out the latest trends and find the equipment you need.</div>
<div id='t22' class='tx' style='left:81.5px;top:539.25px;font-size:15px;font-weight:700;color:#333;transform:scaleX(0.9063);'>Style</div>
<div id='t23' class='tx' style='left:55.5px;top:573.73px;font-size:15.5px;font-weight:700;color:#333;transform:scaleX(0.8847);'>Hybris Light</div>
<div id='t24' class='tx' style='left:49.3px;top:601.08px;font-size:12.5px;font-weight:400;color:#444;transform:scaleX(0.9385);'>Once you have selected a style, you can set additional parameters for text positioning</div>
<div id='t25' class='tx' style='left:49.3px;top:618.67px;font-size:12.5px;font-weight:400;color:#444;transform:scaleX(0.9467);'>and width, which might influence the final rendition.</div>
<div id='t26' class='tx' style='left:558px;top:719.25px;font-size:13px;font-weight:400;color:#444;transform:scaleX(0.8637);'>WIDTH</div>
<div id='t27' class='tx' style='left:81px;top:820.25px;font-size:15px;font-weight:700;color:#333;transform:scaleX(0.9140);'>Options</div>
<div id='t28' class='tx' style='left:79.5px;top:930.27px;font-size:18.5px;font-weight:400;color:#3a3a3a;transform:scaleX(0.9431);'>Picture</div>
<div id='t29' class='tx' style='left:148.5px;top:1044.33px;font-size:15.5px;font-weight:400;color:#3a3a3a;transform:scaleX(0.9424);'>Group of Snowboarders</div>
<div id='t30' class='tx' style='left:79px;top:1164.78px;font-size:18.5px;font-weight:400;color:#3a3a3a;transform:scaleX(0.9669);'>Teaser Targets</div>
<div id='t31' class='tx' style='left:1338px;top:153.22px;font-size:15.5px;font-weight:400;color:#333;transform:scaleX(0.9565);'>Desktop</div>
<div id='t32' class='tx' style='left:1137.3px;top:214.92px;font-size:15.5px;font-weight:400;color:#333;transform:scaleX(0.9448);'>Banner (Hero)</div>
<div id='t33' class='tx' style='left:1137.4px;top:710.53px;font-size:15.5px;font-weight:400;color:#333;transform:scaleX(0.9478);'>Banner (Portrait)</div>
<div id='t34' class='tx' style='left:1563.5px;top:1134.45px;font-size:23px;font-weight:700;color:#111;transform:scaleX(0.8944);'>RIDE A NEW SHAPE</div>
<div id='t35' class='tx' style='left:1397px;top:440.52px;font-size:13.5px;font-weight:400;color:#fff;transform:scaleX(0.9808);opacity:0.95'>The new snowboard season is ahead - Check out the latest trends and find the equipment</div>
<div id='t36' class='tx' style='left:1397px;top:458.02px;font-size:13.5px;font-weight:400;color:#fff;transform:scaleX(0.9442);opacity:0.95'>you need.</div>
<div id='t37' class='tx' style='left:1545px;top:1170.60px;font-size:14px;font-weight:400;color:#222;transform:scaleX(0.7645);'>The new snowboard season is ahead - Check out</div></body></html>
